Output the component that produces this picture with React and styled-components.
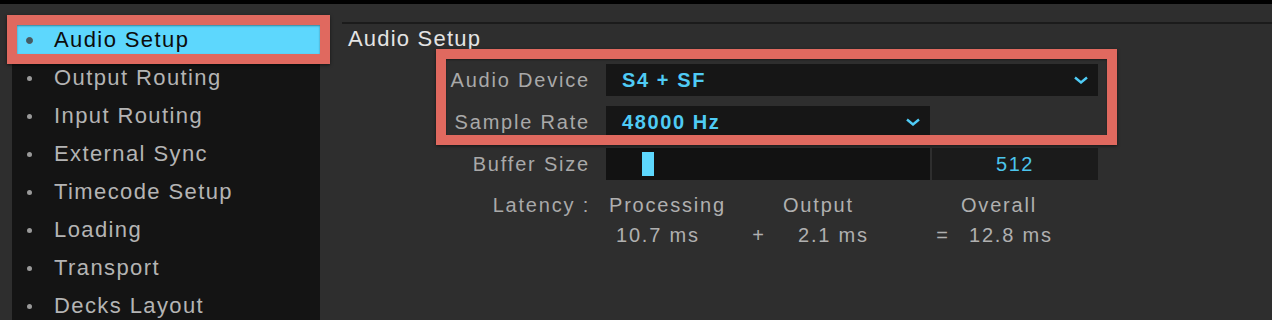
import React from 'react';
import styled, {createGlobalStyle} from 'styled-components';

const GlobalStyle = createGlobalStyle`
  html, body {
    margin: 0;
    padding: 0;
    background: #2e2e2e;
    overflow: hidden;
  }
  body {
    font-family: 'Liberation Sans', Arial, sans-serif;
    -webkit-font-smoothing: antialiased;
  }
`

const navItems = [
  'Audio Setup',
  'Output Routing',
  'Input Routing',
  'External Sync',
  'Timecode Setup',
  'Loading',
  'Transport',
  'Decks Layout',
];

const bufferSizes = [64, 128, 256, 512, 1024, 2048, 4096, 8192, 16384, 32768];

const Chevron = () => (
  <svg width='14' height='8' viewBox='0 0 14 8'>
    <polyline points='1,1.5 7,6.5 13,1.5' fill='none' stroke='#4fcbf5' strokeWidth='2.4' />
  </svg>
);

const App = () => {
  const bufferIndex = bufferSizes.indexOf(512);
  const handleOffset = 36 * bufferIndex / 3;

  return (
    <Page>
      <GlobalStyle />
      <TopBar />
      <Body>
        <Sidebar>
          {navItems.map((name, i) => (
            <NavItem key={name}>
              <NavRow active={i === 0}>
                <BulletBox>
                  <Bullet active={i === 0} />
                </BulletBox>
                <NavText active={i === 0}>{name}</NavText>
              </NavRow>
            </NavItem>
          ))}
        </Sidebar>
        <Content>
          <Title>Audio Setup</Title>
          <Form>
            <Label>Audio Device</Label>
            <Select width={492}>
              <SelectValue>S4 + SF</SelectValue>
              <Chevron />
            </Select>

            <Label>Sample Rate</Label>
            <Select width={324}>
              <SelectValue>48000 Hz</SelectValue>
              <Chevron />
            </Select>

            <Label>Buffer Size</Label>
            <BufferRow>
              <Slider>
                <Handle style={{marginLeft: handleOffset}} />
              </Slider>
              <ValueBox>512</ValueBox>
            </BufferRow>

            <Label latency>Latency :</Label>
            <Latency>
              <Cell pad={3}>Processing</Cell>
              <span />
              <Cell pad={11}>Output</Cell>
              <span />
              <Cell pad={5}>Overall</Cell>

              <Cell pad={10}>10.7 ms</Cell>
              <Op>+</Op>
              <Cell pad={26}>2.1 ms</Cell>
              <Op>=</Op>
              <Cell pad={13}>12.8 ms</Cell>
            </Latency>
          </Form>
        </Content>
      </Body>
      <Callout top={15} left={7} width={323} height={49} />
      <Callout top={49} left={436} width={681} height={96} />
    </Page>
  );
};

const Page = styled.div`
  position: relative;
  width: 1272px;
  height: 320px;
  overflow: hidden;
  background: #2e2e2e;
`

const TopBar = styled.div`
  height: 4px;
  background: #000;
`

const Body = styled.div`
  display: flex;
  height: 316px;
`

const Sidebar = styled.div`
  width: 308px;
  margin: 16px 0 0 12px;
  padding-top: 1px;
  background: #141414;
`

const NavItem = styled.div`
  height: 38px;
  display: flex;
  align-items: center;
`

const NavRow = styled.div`
  flex: 1;
  height: 30px;
  margin-left: 5px;
  display: flex;
  align-items: center;
  background: ${props => props.active ? '#5dd7fd' : 'transparent'};
`

const BulletBox = styled.div`
  width: 24px;
  display: flex;
  justify-content: center;
`

const Bullet = styled.div`
  width: ${props => props.active ? '7px' : '5px'};
  height: ${props => props.active ? '7px' : '5px'};
  border-radius: 50%;
  box-sizing: border-box;
  background: ${props => props.active ? '#3b5f6b' : '#9a9a9a'};
  border: ${props => props.active ? '1.5px solid #555' : 'none'};
`

const NavText = styled.div`
  margin-left: 13px;
  font-size: 22px;
  letter-spacing: 1.4px;
  color: ${props => props.active ? '#0c0c0c' : '#b4b4b4'};
  white-space: nowrap;
`

const Content = styled.div`
  flex: 1;
  margin: 18px 0 0 22px;
  border-top: 2px solid #1b1b1b;
`

const Title = styled.div`
  height: 28px;
  line-height: 29px;
  padding-left: 6px;
  margin-bottom: 12px;
  font-size: 22px;
  letter-spacing: 1.2px;
  color: #e4e4e4;
`

const Form = styled.div`
  display: grid;
  grid-template-columns: 248px 492px;
  grid-auto-rows: 32px;
  column-gap: 16px;
  row-gap: 10px;
`

const Label = styled.div`
  text-align: right;
  line-height: ${props => props.latency ? '30px' : '33px'};
  font-size: 20px;
  letter-spacing: 1.8px;
  color: #a9a9a9;
  white-space: nowrap;
`

const Select = styled.div`
  width: ${props => props.width}px;
  box-sizing: border-box;
  height: 32px;
  padding: 0 10px 0 16px;
  display: flex;
  align-items: center;
  justify-content: space-between;
  background: #161616;
`

const SelectValue = styled.span`
  font-size: 20px;
  font-weight: bold;
  letter-spacing: 1.6px;
  color: #4fcbf5;
`

const BufferRow = styled.div`
  display: flex;
  gap: 2px;
`

const Slider = styled.div`
  width: 324px;
  height: 32px;
  box-sizing: border-box;
  padding: 4px 0;
  display: flex;
  background: #121212;
`

const Handle = styled.div`
  width: 12px;
  height: 24px;
  background: #5dd7fd;
`

const ValueBox = styled.div`
  flex: 1;
  height: 32px;
  line-height: 33px;
  text-align: center;
  font-size: 20px;
  letter-spacing: 1.6px;
  color: #4cc4ec;
  background: #1b1b1b;
`

const Latency = styled.div`
  grid-row: span 2;
  display: grid;
  grid-template-columns: 140px 26px 158px 26px 1fr;
  grid-template-rows: 30px 30px;
  font-size: 20px;
  letter-spacing: 1.8px;
  color: #b0b0b0;
`

const Cell = styled.div`
  line-height: 30px;
  padding-left: ${props => props.pad}px;
  white-space: nowrap;
`

const Op = styled.div`
  line-height: 30px;
  text-align: center;
`

const Callout = styled.div`
  position: absolute;
  top: ${props => props.top}px;
  left: ${props => props.left}px;
  width: ${props => props.width}px;
  height: ${props => props.height}px;
  box-sizing: border-box;
  border: 10px solid #e0695f;
  box-shadow: 0 1px 3px rgba(0, 0, 0, 0.55), inset 0 1px 2px rgba(0, 0, 0, 0.4);
  pointer-events: none;
`

export default App;
